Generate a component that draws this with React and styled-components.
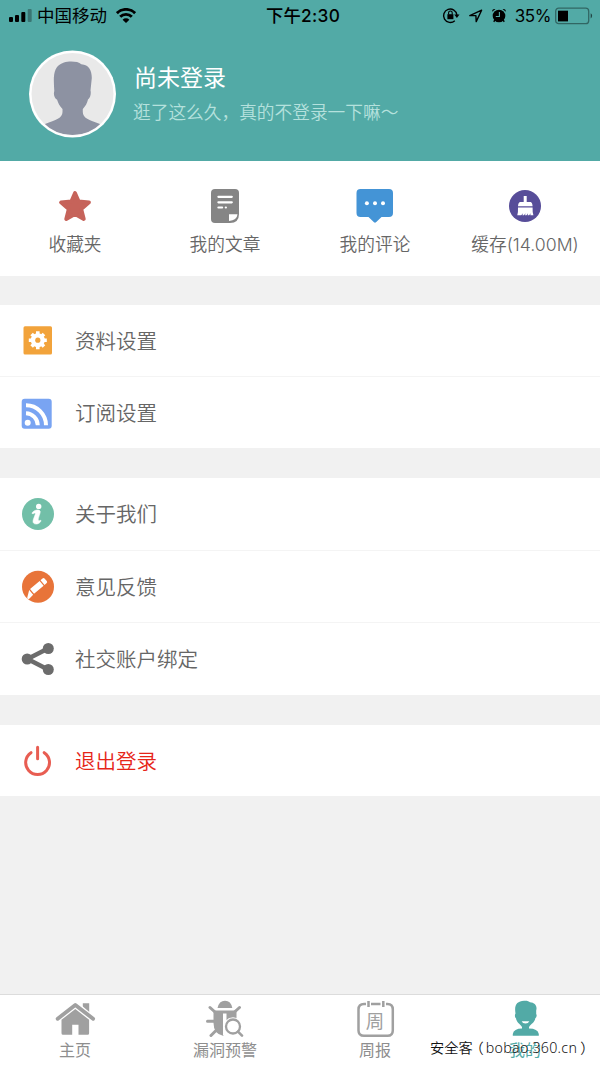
import React from 'react';
import styled, { createGlobalStyle } from 'styled-components';

const colors = {
  teal: '#52aaa6',
  grey: '#f1f1f1',
  line: '#f4f4f4',
  text: '#666',
  tab: '#8e8e8e',
  icon: '#a0a0a0',
  red: '#e62518',
};

const GlobalStyle = createGlobalStyle`
  * {
    box-sizing: border-box;
  }
  body {
    margin: 0;
    background: ${colors.grey};
    font-family: Inter, 'Noto Sans CJK SC', sans-serif;
    font-weight: 350;
  }
  svg {
    display: block;
    flex: none;
  }
`;

const Screen = styled.div`
  display: flex;
  flex-direction: column;
  height: 1066px;
  width: 600px;
  overflow: hidden;
  background: ${colors.grey};
`;

const Header = styled.header`
  height: 161px;
  background: ${colors.teal};
`;
const StatusBar = styled.div`
  display: grid;
  grid-template-columns: 1fr auto 1fr;
  align-items: center;
  height: 30px;
  padding: 0 7px 0 9px;
  color: #000;
  font-size: 17.5px;
  line-height: 30px;
  font-weight: 400;
`;
const StatusGroup = styled.div`
  display: flex;
  align-items: center;
  justify-content: ${({ $end }) => ($end ? 'flex-end' : 'flex-start')};
`;
const Carrier = styled.span`
  margin: 0 9px 0 5px;
`;
const Time = styled.span`
  font-size: 17.3px;
  font-weight: 500;
  letter-spacing: 0.3px;
  padding: 1px 0 0 4px;
`;
const Percent = styled.span`
  margin: 0 4px 0 8px;
  padding-top: 1px;
  font-size: 17px;
  letter-spacing: -0.4px;
`;

const Profile = styled.div`
  display: flex;
  align-items: flex-start;
  padding: 20px 0 0 28px;
`;
const ProfileText = styled.div`
  padding: 11px 0 0 18px;
`;
const Name = styled.div`
  color: #fff;
  font-size: 23px;
  line-height: 34px;
  font-weight: 400;
`;
const Hint = styled.div`
  margin: 5px 0 0 -1px;
  color: #b5e1dd;
  font-size: 17.7px;
  line-height: 26px;
`;

const Shortcuts = styled.section`
  display: grid;
  grid-template-columns: repeat(4, 1fr);
  height: 115px;
  background: #fff;
`;
const Shortcut = styled.div`
  display: flex;
  flex-direction: column;
  align-items: center;
  padding-top: 25px;
  color: ${colors.text};
  font-size: 17.7px;
  line-height: 26px;
  white-space: nowrap;
  svg {
    margin-bottom: 6px;
  }
`;

const Group = styled.section`
  margin-top: ${({ $gap }) => $gap}px;
  background: #fff;
`;
const Row = styled.div`
  display: flex;
  align-items: center;
  height: ${({ $height }) => $height || 72}px;
  padding-left: 18px;
  color: ${({ $danger }) => ($danger ? colors.red : colors.text)};
  font-size: 20.5px;
  & + & {
    border-top: 1px solid ${colors.line};
  }
  svg {
    margin-right: 17px;
  }
`;
const RowLabel = styled.span`
  padding-bottom: 2px;
`;

const TabBar = styled.nav`
  position: relative;
  display: grid;
  grid-template-columns: repeat(4, 1fr);
  height: 72px;
  margin-top: auto;
  border-top: 1px solid #dcdcdc;
  background: #fff;
`;
const Tab = styled.div`
  display: flex;
  flex-direction: column;
  align-items: center;
  padding-top: 3px;
  color: ${({ $active }) => ($active ? colors.teal : colors.tab)};
  font-size: 16px;
  line-height: 24px;
  font-weight: 400;
`;
const Watermark = styled.div`
  position: absolute;
  left: 430px;
  top: 42px;
  display: flex;
  color: #111;
  font-family: 'Noto Sans', 'Noto Sans CJK SC', sans-serif;
  font-size: 14.2px;
  font-weight: 350;
  line-height: 22px;
  white-space: nowrap;
  text-shadow: -1px -1px 0 #fff;
`;
const Site = styled.span`
  letter-spacing: 0.3px;
`;
const Paren = styled.span`
  margin: 0 ${({ $close }) => ($close ? -3 : 2)}px 0 ${({ $close }) => ($close ? 3 : -3)}px;
`;

const IconSignal = () => (
  <svg width="23" height="16" viewBox="0 0 23 16">
    <rect x="0" y="9" width="4" height="5" rx="1" />
    <rect x="6" y="7" width="4" height="7" rx="1" />
    <rect x="12.3" y="4" width="4" height="10" rx="1" />
    <rect x="18.7" y="1" width="4" height="13" rx="1" opacity=".3" />
  </svg>
);
const IconWifi = () => (
  <svg width="20" height="16" viewBox="0 0 20 16" fill="none" stroke="#000" strokeWidth="2.9">
    <path d="M.9 5.1a13 13 0 0 1 18.2 0" />
    <path d="M4.2 8.8a8.2 8.2 0 0 1 11.600 0" />
    <path d="M6.600 11.700a4.800 4.800 0 0 1 6.800 0L10 15z" fill="#000" stroke="none" />
  </svg>
);
const IconStatus = () => (
  <svg width="65" height="18" viewBox="442 6 65 18" fill="none" stroke="#000" strokeWidth="1.4">
    <path d="M454.8 19.7a6.7 6.7 0 1 1 2.1-5.7" />
    <path d="M454.2 13.4h5.3L456.9 17z" fill="#000" stroke="none" />
    <rect x="447.4" y="13.2" width="6" height="5" fill="#000" stroke="none" />
    <path d="M448.6 13.5v-1.7a1.8 1.8 0 0 1 3.6 0v1.7" strokeWidth="1.1" />
    <path d="M481.6 9.2L469.8 14.6h6.1l.3 6z" strokeWidth="1.4" strokeLinejoin="round" />
    <circle cx="499" cy="15" r="6.3" fill="#000" stroke="none" />
    <path d="M492.2 10.800c-.3-2 1.200-3.500 3.300-2.700zM505.800 10.800c.3-2-1.200-3.500-3.300-2.700z" fill="#000" stroke="none" />
    <path d="M495 19l-1.300 1.700M503 19l1.300 1.700" />
    <path d="M499.4 11v4.500h-3.600" stroke={colors.teal} strokeWidth="1.1" />
  </svg>
);
const IconBattery = () => (
  <svg width="38" height="18" viewBox="0 0 38 18">
    <rect x=".7" y="1.2" width="33" height="15.5" rx="3" fill="none" stroke="#000" strokeWidth="1.3" opacity=".4" />
    <rect x="3" y="3.7" width="10" height="10.7" />
    <path d="M35.7 6.3c1.9 1 1.9 4.2 0 5.2z" opacity=".6" />
  </svg>
);

const Avatar = () => (
  <svg width="88" height="88" viewBox="28 50 88 88">
    <clipPath id="avatar">
      <circle cx="72.5" cy="94" r="41" />
    </clipPath>
    <circle cx="72.5" cy="94" r="43.5" fill="#fff" />
    <circle cx="72.5" cy="94" r="41" fill="#e9e9e9" />
    <path
      clipPath="url(#avatar)"
      fill="#8d92a2"
      d="M54.300 91C53.600 79 52 66 64 62.500c5-1.500 14-1.400 17.300 1.700C89 65 91.800 70 91.800 78L90.500 90.500c.8 3-.2 7.500-2.500 9-1 4-2.500 6.500-5.200 9.500v3c0 6 6 8 17.200 12l-4 16H49l-4-16c11-4 17.500-6 17.500-12v-3c-3-3-4-5.500-5.400-9.300C54.500 98.500 53.200 94 54.300 91z"
    />
    <path d="M46 126a41.200 41.200 0 0 0 53 0a41.500 41.500 0 0 1-53 0z" fill="#f0f0f3" />
  </svg>
);

const IconStar = () => (
  <svg width="40" height="40" viewBox="55 186 40 40">
    <path
      d="M75 193l3.700 8.500 10.300.9-7.700 6.800 2.500 9.800-8.800-5-8.800 5 2.500-9.800-7.700-6.800 10.300-.9z"
      fill="#c6635a"
      stroke="#c6635a"
      strokeWidth="3.800"
      strokeLinejoin="round"
    />
  </svg>
);
const IconArticle = () => (
  <svg width="40" height="40" viewBox="205 186 40 40">
    <path d="M215 189h20q4 0 4 4v21q0 9-9 9h-15q-4 0-4-4v-26q0-4 4-4z" fill="#858585" />
    <path d="M229 220.900v-6.700h8.500q-.5 6-8.500 6.700z" fill="#fff" />
    <path
      d="M218.400 196.800h13.400M218.400 202.300h13.400M218.400 207.500h3.700M225.800 207.500h.1"
      stroke="#fff"
      strokeWidth="2.200"
      strokeLinecap="round"
    />
  </svg>
);
const IconComment = () => (
  <svg width="40" height="40" viewBox="355 186 40 40">
    <path d="M360.500 189h28.500q4 0 4 4v20q0 4-4 4h-7.500l-5.500 5.200q-1 .9-2 0l-5.500-5.200h-8q-4 0-4-4v-20q0-4 4-4z" fill="#4494d6" />
    <g fill="#fff">
      <circle cx="366.900" cy="203.300" r="2" />
      <circle cx="375" cy="203.300" r="2" />
      <circle cx="383" cy="203.300" r="2" />
    </g>
  </svg>
);
const IconClean = () => (
  <svg width="40" height="40" viewBox="505 186 40 40">
    <circle cx="525" cy="206" r="16" fill="#574d99" />
    <path
      fill="#fff"
      d="M523.700 196h3v6h4q1.600.5 1.900 4.300h-14.600q.3-3.800 2-4.300h3.700zM518 207.500h14.600q-.2 5 .8 7.700h-3.100l.3-2-1.400 2h-1.600l.5-2-1.600 2H525l.6-2-1.700 2h-1.500l.7-2-1.900 2h-3.900q.9-2.500.7-7.700z"
    />
  </svg>
);

const IconSettings = () => (
  <svg width="40" height="40" viewBox="18 321 40 40">
    <rect x="23.500" y="326.200" width="28.500" height="28.300" rx="1.500" fill="#f2a33b" />
    <g stroke="#fff" strokeWidth="3.600">
      <path d="M37.800 331.200v18M28.800 340.200h18M31.600 334l12.400 12.400M44 334l-12.400 12.400" />
    </g>
    <circle cx="37.800" cy="340.200" r="7" fill="#fff" />
    <circle cx="37.800" cy="340.200" r="2.600" fill="#f2a33b" />
  </svg>
);
const IconRss = () => (
  <svg width="40" height="40" viewBox="18 393 40 40">
    <rect x="21.700" y="398.700" width="30" height="30" rx="3" fill="#79a4f2" />
    <circle cx="27.700" cy="422.700" r="3" fill="#fff" />
    <path d="M26 413.200a12.300 12.300 0 0 1 11.800 12M26 405.200a20 20 0 0 1 20 20" fill="none" stroke="#fff" strokeWidth="4" />
  </svg>
);
const IconInfo = () => (
  <svg width="40" height="40" viewBox="18 494 40 40">
    <circle cx="38" cy="514" r="16" fill="#72bfa8" />
    <circle cx="38.700" cy="506.400" r="2.700" fill="#fff" />
    <path
      d="M32 513.500c.6-3 6.700-4.800 8.100-2.400.8 1.400-2.300 7.200-1.900 9 .2 1 1.800.6 2.600.1.500 1.800-2.200 3.800-4.600 3.800-3.300 0-3.700-2.200-2.600-5.200l1.700-4.500c.3-1.200-1-1.700-2-.6z"
      fill="#fff"
      stroke="#fff"
      strokeWidth=".6"
    />
  </svg>
);
const IconPencil = () => (
  <svg width="40" height="40" viewBox="18 567 40 40">
    <circle cx="38" cy="586.800" r="16" fill="#e87439" />
    <g transform="rotate(-40 38 586.500)" fill="#fff">
      <path d="M29 583.500v6.200l-5.500.5q-2-.5-1-2zM30.300 583.300h12.500v6.200H30.300zM44 583.300h2.500q1.700 0 1.700 1.500v3.200q0 1.500-1.700 1.500H44z" />
    </g>
  </svg>
);
const IconShare = () => (
  <svg width="40" height="40" viewBox="18 639 40 40" fill="#6c6c6c">
    <path d="M48 648.500L27.500 659 48 669.500" fill="none" stroke="#6c6c6c" strokeWidth="4.500" />
    <circle cx="27.200" cy="659" r="5.500" />
    <circle cx="48.300" cy="648.500" r="5.500" />
    <circle cx="48.300" cy="669.500" r="5.500" />
  </svg>
);
const IconPower = () => (
  <svg width="40" height="40" viewBox="18 741 40 40" fill="none" stroke="#e85d52" strokeWidth="3" strokeLinecap="round">
    <path d="M37.600 747.300v11.500M31 752.700a11.900 11.900 0 1 0 13.200 0" />
  </svg>
);

const IconHome = () => (
  <svg width="42" height="40" viewBox="54 998 42 40" fill={colors.icon}>
    <path d="M82.800 1003.200h6.400v15l-6.400-6z" />
    <path d="M57.500 1019l17.600-15 18 15" fill="none" stroke="#fff" strokeWidth="6" />
    <path d="M57.700 1018.700l17.600-13.700 17.800 13.700" fill="none" stroke={colors.icon} strokeWidth="3.900" strokeLinecap="round" strokeLinejoin="round" />
    <path d="M61.500 1019.800l13.800-10.800 13.800 10.800v13.500q0 1.500-1.500 1.500H78.500v-10h-6.300v10H63q-1.500 0-1.500-1.500z" />
  </svg>
);
const IconBug = () => (
  <svg width="42" height="40" viewBox="204 998 42 40" fill={colors.icon}>
    <path d="M217.500 1008q1.500-7.300 7.500-7.300t7.300 7.300z" />
    <path
      d="M210 1007.500l5.500 5M239.500 1007.500l-5.500 5M207.500 1021.200h8M211 1035.500l5-5"
      stroke={colors.icon}
      strokeWidth="3"
      strokeLinecap="round"
    />
    <path d="M213.500 1010.500h23v8h-8l-5 17.500q-10-2-10-13z" />
    <path d="M223 1013.500h3.500v22H223z" fill="#fff" />
    <circle cx="233" cy="1026.500" r="9.300" fill="#fff" />
    <circle cx="233" cy="1026.500" r="7" fill="none" stroke={colors.icon} strokeWidth="2.300" />
    <path d="M238 1031.600l4 4" stroke={colors.icon} strokeWidth="2.700" strokeLinecap="round" />
  </svg>
);

const CalendarFrame = styled.div`
  display: grid;
  place-items: center;
  width: 42px;
  height: 40px;
  color: ${colors.icon};
  font-size: 18.5px;
  line-height: 20px;
  svg,
  span {
    grid-area: 1 / 1;
  }
  span {
    padding-top: 6px;
  }
`;
const IconCalendar = () => (
  <CalendarFrame>
    <svg width="42" height="40" viewBox="354 998 42 40" fill="none" stroke={colors.icon} strokeWidth="2.500">
      <path d="M366 1004h-2q-5.500 0-5.500 5.500v21q0 5.300 5.500 5.300h23.500q5.300 0 5.300-5.300v-21q0-5.500-5.300-5.500H386M371 1004h9.500" />
      <path d="M368.500 1001v6M383.300 1001v6" />
    </svg>
    <span>周</span>
  </CalendarFrame>
);
const IconUser = () => (
  <svg width="42" height="40" viewBox="504 998 42 40" fill={colors.teal}>
    <path d="M515.500 1013.500c-1.500-8.500 1.500-12.500 8.500-12.800 3-.2 5 .4 6 1.500 5 .3 7.500 3.800 6.200 8.300v3.500c1 1.500.3 3.500-.9 4.300-.5 4-4 5.500-6.300 8.700v1.500q8.800 0 9.800 5.500v1.700H512.800v-1.700q1-5.500 9.200-5.500v-1.500c-2.300-3.200-5.500-4.700-6-8.700-1.200-.8-1.500-3.300-.5-4.800z" />
    <path d="M521.700 1021.200h7.600q-.8 2.200-3.800 2.200t-3.800-2.200z" fill="#fff" />
  </svg>
);

const shortcuts = [
  { icon: IconStar, label: '收藏夹' },
  { icon: IconArticle, label: '我的文章' },
  { icon: IconComment, label: '我的评论' },
  { icon: IconClean, label: '缓存(14.00M)' },
];

const groups = [
  {
    gap: 29,
    rows: [
      { icon: IconSettings, label: '资料设置', height: 71 },
      { icon: IconRss, label: '订阅设置' },
    ],
  },
  {
    gap: 30,
    rows: [
      { icon: IconInfo, label: '关于我们' },
      { icon: IconPencil, label: '意见反馈' },
      { icon: IconShare, label: '社交账户绑定', height: 73 },
    ],
  },
  { gap: 30, rows: [{ icon: IconPower, label: '退出登录', danger: true, height: 71 }] },
];

const tabs = [
  { icon: IconHome, label: '主页' },
  { icon: IconBug, label: '漏洞预警' },
  { icon: IconCalendar, label: '周报' },
  { icon: IconUser, label: '我的', active: true },
];

const App = () => (
  <Screen>
    <GlobalStyle />
    <Header>
      <StatusBar>
        <StatusGroup>
          <IconSignal />
          <Carrier>中国移动</Carrier>
          <IconWifi />
        </StatusGroup>
        <Time>下午2:30</Time>
        <StatusGroup $end>
          <IconStatus />
          <Percent>35%</Percent>
          <IconBattery />
        </StatusGroup>
      </StatusBar>
      <Profile>
        <Avatar />
        <ProfileText>
          <Name>尚未登录</Name>
          <Hint>逛了这么久，真的不登录一下嘛～</Hint>
        </ProfileText>
      </Profile>
    </Header>

    <Shortcuts>
      {shortcuts.map(({ icon: Icon, label }) => (
        <Shortcut key={label}>
          <Icon />
          {label}
        </Shortcut>
      ))}
    </Shortcuts>

    {groups.map(({ gap, rows }, i) => (
      <Group key={i} $gap={gap}>
        {rows.map(({ icon: Icon, label, danger, height }) => (
          <Row key={label} $danger={danger} $height={height}>
            <Icon />
            <RowLabel>{label}</RowLabel>
          </Row>
        ))}
      </Group>
    ))}

    <TabBar>
      {tabs.map(({ icon: Icon, label, active }) => (
        <Tab key={label} $active={active}>
          <Icon />
          {label}
        </Tab>
      ))}
      <Watermark>
        安全客
        <Paren>（</Paren>
        <Site>bobao.360.cn</Site>
        <Paren $close>）</Paren>
      </Watermark>
    </TabBar>
  </Screen>
);

export default App;
